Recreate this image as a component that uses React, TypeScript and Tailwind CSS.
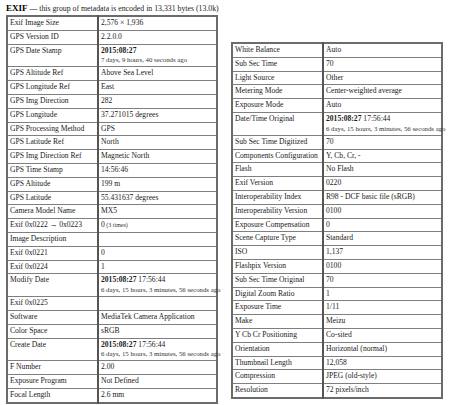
type DateVal = { date: string; time?: string; ago: string };
type Row = [string, string | DateVal, string?];

const leftRows: Row[] = [
  ['Exif Image Size', '2,576 × 1,936'],
  ['GPS Version ID', '2.2.0.0'],
  ['GPS Date Stamp', { date: '2015:08:27', ago: '7 days, 9 hours, 40 seconds ago' }],
  ['GPS Altitude Ref', 'Above Sea Level'],
  ['GPS Longitude Ref', 'East'],
  ['GPS Img Direction', '282'],
  ['GPS Longitude', '37.271015 degrees'],
  ['GPS Processing Method', 'GPS'],
  ['GPS Latitude Ref', 'North'],
  ['GPS Img Direction Ref', 'Magnetic North'],
  ['GPS Time Stamp', '14:56:46'],
  ['GPS Altitude', '199 m'],
  ['GPS Latitude', '55.431637 degrees'],
  ['Camera Model Name', 'MX5'],
  ['Exif 0x0222 → 0x0223', '0', '(3 times)'],
  ['Image Description', ''],
  ['Exif 0x0221', '0'],
  ['Exif 0x0224', '1'],
  ['Modify Date', { date: '2015:08:27', time: '17:56:44', ago: '6 days, 15 hours, 3 minutes, 56 seconds ago' }],
  ['Exif 0x0225', ''],
  ['Software', 'MediaTek Camera Application'],
  ['Color Space', 'sRGB'],
  ['Create Date', { date: '2015:08:27', time: '17:56:44', ago: '6 days, 15 hours, 3 minutes, 56 seconds ago' }],
  ['F Number', '2.00'],
  ['Exposure Program', 'Not Defined'],
  ['Focal Length', '2.6 mm'],
];

const rightRows: Row[] = [
  ['White Balance', 'Auto'],
  ['Sub Sec Time', '70'],
  ['Light Source', 'Other'],
  ['Metering Mode', 'Center-weighted average'],
  ['Exposure Mode', 'Auto'],
  ['Date/Time Original', { date: '2015:08:27', time: '17:56:44', ago: '6 days, 15 hours, 3 minutes, 56 seconds ago' }],
  ['Sub Sec Time Digitized', '70'],
  ['Components Configuration', 'Y, Cb, Cr, -'],
  ['Flash', 'No Flash'],
  ['Exif Version', '0220'],
  ['Interoperability Index', 'R98 - DCF basic file (sRGB)'],
  ['Interoperability Version', '0100'],
  ['Exposure Compensation', '0'],
  ['Scene Capture Type', 'Standard'],
  ['ISO', '1,137'],
  ['Flashpix Version', '0100'],
  ['Sub Sec Time Original', '70'],
  ['Digital Zoom Ratio', '1'],
  ['Exposure Time', '1/11'],
  ['Make', 'Meizu'],
  ['Y Cb Cr Positioning', 'Co-sited'],
  ['Orientation', 'Horizontal (normal)'],
  ['Thumbnail Length', '12,058'],
  ['Compression', 'JPEG (old-style)'],
  ['Resolution', '72 pixels/inch'],
];

// value cell: plain text, or a bold date with a relative "ago" line under it
function Value({ value, note }: { value: Row[1]; note?: string }) {
  if (typeof value === 'string') {
    return (
      <>
        {value}
        {note && <span className="text-[6px] text-[#333]"> {note}</span>}
      </>
    );
  }
  return (
    <>
      <span className="font-bold">{value.date}</span>
      {value.time && <span> {value.time}</span>}
      <div className="text-[6.8px] leading-[9px] text-[#333] whitespace-nowrap">{value.ago}</div>
    </>
  );
}

function MetaTable({ rows }: { rows: Row[] }) {
  return (
    <table className="w-[212px] border-collapse border-2 border-[#6b6b6b] table-fixed">
      <colgroup>
        <col className="w-[91px]" />
        <col />
      </colgroup>
      <tbody>
        {rows.map(([label, value, note]) => (
          <tr key={label}>
            <td className="border border-[#7f7f7f] border-r-2 border-r-[#555] pl-[2px] pr-[1px] py-[2px] align-top leading-[8.8px] whitespace-nowrap">
              {label}
            </td>
            <td className="border border-[#7f7f7f] px-[2px] py-[2px] align-top leading-[8.8px] whitespace-nowrap">
              <Value value={value} note={note} />
            </td>
          </tr>
        ))}
      </tbody>
    </table>
  );
}

export default function App() {
  return (
    <div className="w-[450px] h-[405px] bg-white pl-[6px] text-[7.6px] text-[#1a1a1a] font-['Liberation_Serif',serif] overflow-hidden">
      <div className="h-[15px] pt-[3px] leading-[10px]">
        <span className="font-bold text-[9px] text-black">EXIF</span>
        <span className="text-[7.8px]"> — this group of metadata is encoded in 13,331 bytes (13.0k)</span>
      </div>
      <div className="flex items-start gap-[13px]">
        <MetaTable rows={leftRows} />
        <div className="mt-[27px]">
          <MetaTable rows={rightRows} />
        </div>
      </div>
    </div>
  );
}
